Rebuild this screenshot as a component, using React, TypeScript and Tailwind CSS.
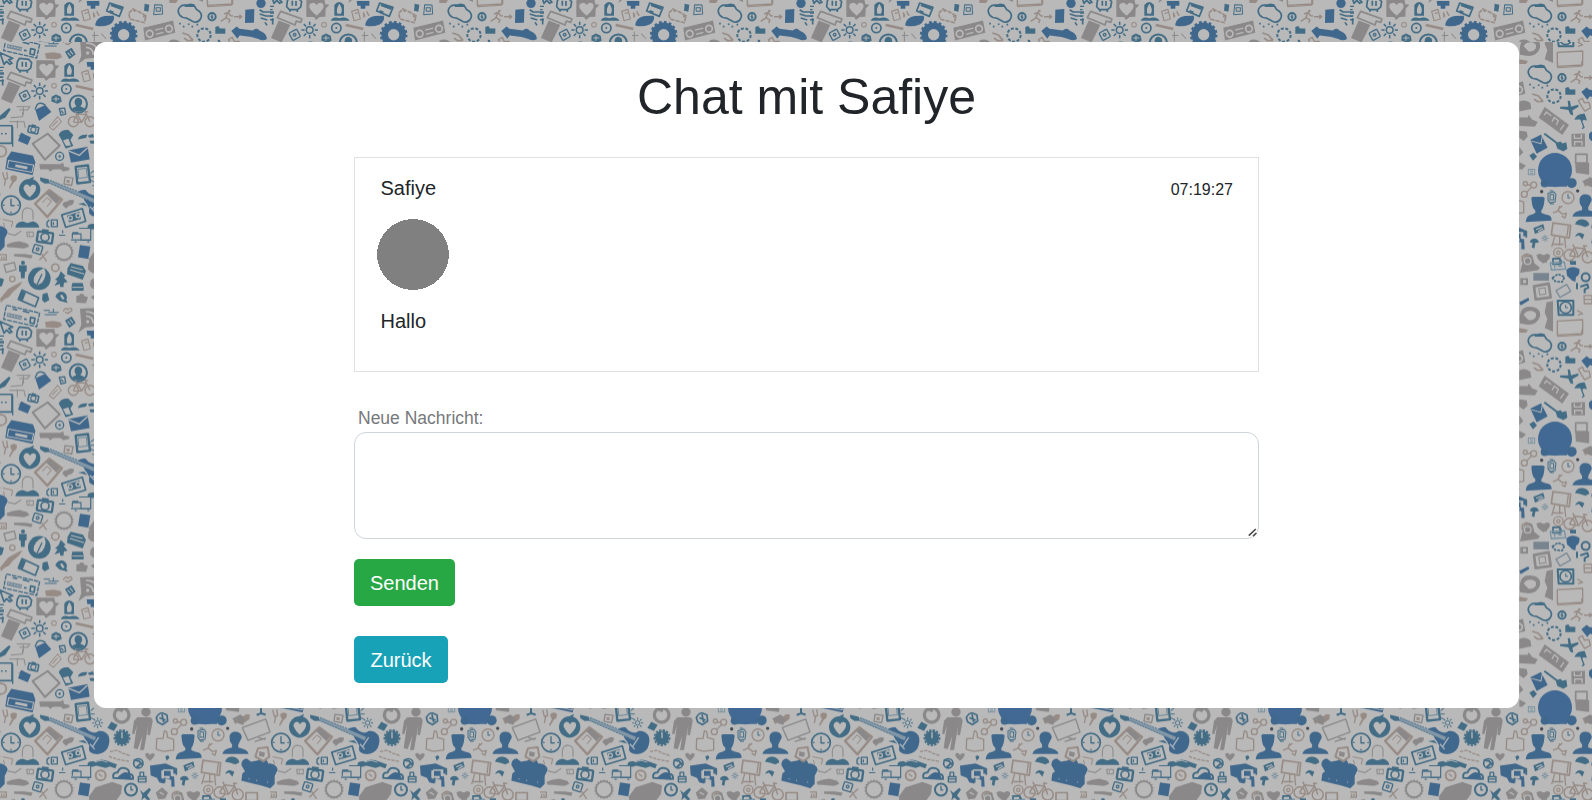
import React from "react";

const LIGHT = "#b9b9b9";
const BLUE = "#40678c";
const TEAL = "#436c85";
const GRAY = "#8a8888";
const TAN = "#978b85";

type P = { t?: string };

const solid = (fill: string) => ({ fill, stroke: "none" });
const line = (stroke: string, w: number) => ({
  fill: "none",
  stroke,
  strokeWidth: w,
  strokeLinejoin: "round" as const,
});

const Bust = ({ t, c = BLUE }: P & { c?: string }) => (
  <g transform={t} {...solid(c)}>
    <path d="M-21-30-17-33H14L19-30 17-12Q14 4 9 8V15Q20 20 32 22Q40 26 40 38L-38 42Q-36 26-27 22Q-16 20-9 15V8Q-18 0-19-12Z" />
  </g>
);

const Bike = ({ t }: P) => (
  <g transform={t} {...line(TAN, 4)}>
    <circle cx="-25" cy="8" r="15" />
    <circle cx="25" cy="8" r="15" />
    <path d="M-25 8-14-14H14L0 10H-25M0 10-14-14-20-22M14-14 25 8M14-14 10-22H20" />
  </g>
);

const Gear = ({ t, r, c, n = 14, w = 8 }: P & { r: number; c: string; n?: number; w?: number }) => (
  <g transform={t} fill="none" stroke={c}>
    <circle r={r} strokeWidth={w} />
    {Array.from({ length: n }, (_, i) => (
      <path key={i} transform={`rotate(${(360 / n) * i})`} d={`M0 ${-r}V${-r - w}`} strokeWidth={w * 0.8} />
    ))}
  </g>
);

const Sun = ({ t, c = TEAL }: P & { c?: string }) => (
  <g transform={t} {...line(c, 4.5)}>
    <circle r="10" />
    {[0, 45, 90, 135, 180, 225, 270, 315].map((a) => (
      <path key={a} transform={`rotate(${a})`} d="M0-15V-25" />
    ))}
  </g>
);

const Camera = ({ t, c = TEAL }: P & { c?: string }) => (
  <g transform={t} {...line(c, 7)}>
    <rect x="-23" y="-15" width="46" height="31" rx="3" />
    <circle r="12" strokeWidth="5" />
    <path d="M-12-20H8" />
  </g>
);

const SmallCamera = ({ t, c = TEAL }: P & { c?: string }) => (
  <g transform={t} {...line(c, 4)}>
    <rect x="-13" y="-12" width="26" height="25" rx="3" />
    <circle r="4" />
  </g>
);

const Guitar = () => (
  <g>
    <path d="M120 44 146 50 150 62 134 63 121 55Z" {...solid(TEAL)} />
    <path d="M232 90Q240 80 256 82L266 92 276 97Q288 101 296 93Q314 91 325 106Q333 124 322 146Q306 167 280 161Q262 155 268 138L262 126Q252 116 250 104Z" {...solid(BLUE)} />
    <path d="M148 57 286 116" stroke="#8397a7" strokeWidth="11" fill="none" />
    <path d="M150 53 262 98M146 60 270 115" stroke={TEAL} strokeWidth="2.5" strokeDasharray="6 3" fill="none" />
    <path d="M278 140 296 112M270 132 284 148" stroke="#a9b3bb" strokeWidth="4" fill="none" />
  </g>
);

/* Upper left quarter of the tile: gadgets, sun, bike, radio. */
const UpperLeft = () => (
  <g transform="translate(0 -42) scale(.33333)">
    <path d="M135 160 160 157 182 161 186 172 172 178 138 176Z" {...solid(TAN)} />
    <path d="M195 155 215 143 227 163 208 178Z" {...solid(TEAL)} />
    <path d="M203 158 212 168M210 152 219 163" {...line(LIGHT, 3)} />
    <path d="M0 158 38 175 26 179 36 190 29 193 20 184 12 193Z" {...line(TEAL, 5)} />
    <g {...line(TEAL, 5)}>
      <path d="M58 175 86 178 95 188 92 204 82 212H58L50 203 52 186Z" />
      <path d="M67 185V200M78 186V201M60 212V218M82 212V219" />
      <path d="M0 202H12M0 212H8M0 222H12M0 232H8M0 242H12" strokeWidth="4" />
    </g>
    <path d="M109 181H163L166 196 178 197 167 209 166 233 149 234 138 243 132 234H109Z" {...solid(GRAY)} />
    <path d="M140 230Q112 209 119 196Q131 186 140 198Q150 185 160 196Q165 210 140 230Z" {...solid(LIGHT)} />
    <path d="M193 198Q207 180 222 198V230H193ZM182 245Q190 230 208 238Q228 230 239 245Z" {...solid(TEAL)} />
    <path d="M208 194Q220 210 213 224H202Q197 210 208 194Z" {...solid(LIGHT)} />
    <path d="M260 186H298V200H286V209H272V200H262Z" {...solid(BLUE)} />
    <path d="M245 217 264 211 271 240 252 245ZM254 223 264 221M280 220 282 236M290 216 296 230" {...line(TAN, 3.5)} />
    <path d="M32 217 96 240 92 250 79 246 75 258 22 236Z" {...line(GRAY, 5)} />
    <path d="M26 244 61 258 35 310 3 297Z" {...solid(GRAY)} />
    <SmallCamera t="translate(74 287) rotate(-28)" />
    <Sun t="translate(119 273)" />
    <circle cx="162" cy="257" r="7" {...line(TAN, 3)} />
    <circle cx="199" cy="267" r="14" {...line(TEAL, 5)} />
    <circle cx="199" cy="267" r="3" {...solid(TEAL)} />
    <path d="M227 258 280 270" {...line(TAN, 8)} />
    <path d="M155 290 168 283 182 290 185 305 172 311 154 304Z" {...solid(TEAL)} />
    <path d="M160 297H178M168 290V305" {...line(LIGHT, 3)} />
    <circle cx="235" cy="312" r="26" {...line(TEAL, 6)} />
    <path d="M235 293Q249 295 246 311L241 319Q250 321 255 327Q236 343 215 327Q221 321 229 319L224 310Q222 295 235 293Z" {...solid(TEAL)} />
    <path d="M106 329 136 315 154 336 117 363Z" {...solid(BLUE)} />
    <path d="M105 328 112 313Q122 305 136 315" {...line(TEAL, 4)} />
    <path d="M178 326 194 324 197 342 183 346ZM184 332 190 340" {...line(TEAL, 4)} />
    <path d="M0 347 27 324 32 328 16 353 0 360Z" {...solid(TEAL)} />
    <path d="M50 320H90L82 330H58M70 322V345M32 353 68 350V336M28 365H72L76 384M52 362V385M55 408 70 400" {...line(GRAY, 3)} />
    <path d="M148 380 173 350 184 365 160 390ZM157 379 173 362" {...line(TAN, 3)} />
    <Bike t="translate(245 357)" />
    <g transform="translate(100 389) rotate(12) scale(.65)"><Camera /></g>
    <path d="M0 377H36V430H0" {...line(TEAL, 5)} />
    <path d="M38 380V440" {...line(TEAL, 4)} />
    <path d="M3 401H25" {...line(TEAL, 5)} strokeDasharray="5 7" />
    <path d="M63 398 93 412 83 435 54 423Z" {...solid(BLUE)} />
    <path d="M98 431 143 401 179 437 135 479Z" {...line(GRAY, 6)} />
    <path d="M176 405Q183 388 205 390L220 405 211 420 220 438 197 446 185 420Z" {...solid(TEAL)} />
    <path d="M189 421 205 416 213 436 198 438Z" {...solid(LIGHT)} />
    <path d="M234 418Q235 403 262 404L258 414ZM263 407 279 402 282 412 268 413ZM268 422H285V431H272Z" {...solid(TEAL)} />
    <circle cx="3" cy="454" r="16" {...line(TAN, 5)} />
    <circle cx="179" cy="469" r="12" {...line(TEAL, 4)} />
    <circle cx="179" cy="469" r="3.5" {...solid(TEAL)} />
    <path d="M205 451 263 440 269 478 213 488Z" {...solid(BLUE)} />
    <path d="M206 453 238 466 263 443" {...line(LIGHT, 4)} />
    <path d="M34 454 99 467 106 486 98 525 16 507 21 474Z" {...solid(BLUE)} />
    <path d="M26 481 101 495 96 517 22 503Z" {...line(LIGHT, 3)} />
    <path d="M46 497 82 504" {...line(LIGHT, 8)} />
    <path d="M118 492H180L190 488 192 500 208 503V510L190 515 182 508H160L150 515 145 508H120Z" {...solid(GRAY)} />
    <path d="M227 500 264 496 270 546 232 550Z" {...line(TEAL, 7)} />
    <path d="M234 508 259 505 262 532 236 535Z" {...line(TEAL, 2)} />
    <path d="M272 520 282 512M272 530H284M271 540 282 546" {...line(TEAL, 3)} />
    <path d="M195 531 219 534 215 556 192 552Z" {...line(GRAY, 4)} />
    <path d="M200 539 210 541 208 549 199 547Z" {...solid(TAN)} />
    <path d="M8 517 13 537 23 535 20 516M17 537 13 557" {...line(TAN, 4)} />
    <path d="M31 530Q42 520 51 530Q51 545 42 546L30 566 27 563 36 544Q30 540 31 530Z" {...solid(TAN)} />
  </g>
);

/* Band holding the guitar, clocks, busts and cloud. */
const MiddleBand = () => (
  <g transform="translate(0 120.6) scale(.33333)">
    <circle cx="89" cy="81" r="32" {...solid(TEAL)} />
    <path d="M89 48 102 42 98 54Z" {...solid(TEAL)} />
    <path d="M89 104Q63 79 74 68Q84 61 90 73Q97 61 107 69Q114 82 89 104Z" {...solid(LIGHT)} />
    <Guitar />
    <circle cx="33" cy="128" r="28" {...line(TEAL, 5)} />
    <path d="M33 109V129H44M9 128H14M52 128H57M33 147V152" {...line(TEAL, 4)} />
    <path d="M105 123 148 82 186 111 142 163Z" {...line(TAN, 7)} />
    <path d="M138 93 152 84 181 110 169 124Z" {...solid(GRAY)} />
    <path d="M127 120 141 105 154 116 141 132" {...line(TAN, 3)} />
    <path d="M187 127Q190 116 201 117 208 109 222 113 222 128 208 129L198 138Z" {...solid(GRAY)} />
    <path d="M234 124 252 121 262 131Z" {...solid(TEAL)} />
    <path d="M67 171V152Q70 136 83 136Q100 138 99 153V171" {...line(GRAY, 3)} />
    <path d="M46 195Q48 178 68 176L82 181 99 176Q117 181 118 195Z" {...solid(TEAL)} />
    <path d="M185 157 247 138 257 176 197 194Z" {...line(TEAL, 5)} />
    <path d="M201 159 238 148 243 169 207 179Z" {...solid(TEAL)} />
    <circle cx="211" cy="166" r="6" {...line(LIGHT, 4)} />
    <circle cx="234" cy="159" r="6" {...line(LIGHT, 4)} />
    <path d="M154 172H172V192H154ZM148 172 141 178V190L148 194M160 178V187" {...line(TEAL, 4)} />
    <path d="M8 170 38 177 34 194M10 180 14 193" {...line(TAN, 3)} />
    <path d="M24 213 45 218 64 205M80 208H100V222H82ZM88 212V218" {...line(GRAY, 3)} />
    <Camera t="translate(135 224) rotate(8)" />
    <path d="M20 246 35 240 58 236 82 243 88 252 72 258 40 255 22 254ZM42 274H74L98 278 94 288 74 284 42 281Z" {...solid(GRAY)} />
    <path d="M177 218H196M188 203V212M213 232H273M217 210H235M237 197H272V233H243V214H217V228M224 238H230M262 238H268" {...line(TEAL, 3.5)} />
    <SmallCamera t="translate(113 260) rotate(18)" />
    <path d="M118 292 144 266M122 270 140 296" {...line(TAN, 4)} />
    <Gear t="translate(192 268)" r={24} c={GRAY} n={18} w={5} />
    <path d="M240 247 271 252 265 289 234 284Z" {...solid(BLUE)} />
    <path d="M0 276H19V292H0M5 282V289M12 282V289" {...line(TAN, 4)} />
    <g transform="translate(293 69) scale(.65)"><Sun /></g>
    <path d="M334 65 353 75 342 93 322 84Z" {...solid(TEAL)} />
    <circle cx="365" cy="45" r="22" {...line(GRAY, 10)} />
    <path d="M350 26 365 32 370 18" {...line(GRAY, 8)} />
    <circle cx="366" cy="113" r="21" {...solid(TEAL)} />
    <circle cx="366" cy="113" r="23" {...line(TEAL, 5)} strokeDasharray="7 4" />
    <path d="M366 96V115" {...line(LIGHT, 4)} />
    <circle cx="438" cy="36" r="14" {...solid(GRAY)} />
    <path d="M412 52H448Q458 53 458 64L450 106 442 105 445 75 432 150 420 151 427 108 413 148 401 145 408 95 411 76 403 103 396 101 402 63Z" {...solid(GRAY)} />
    <path d="M330 155 350 151 369 160 390 167M327 169 352 178 387 184" {...line(TAN, 4)} strokeDasharray="10 3" />
    <path d="M262 194Q263 182 286 184 304 174 326 184L351 193 346 205 330 199 317 204 289 197 276 201Z" {...solid(TEAL)} />
    <path d="M284 186 303 181 322 187" {...line(LIGHT, 3)} />
    <circle cx="302" cy="226" r="15" {...line(TAN, 6)} />
    <path d="M296 221 307 230" {...line(TAN, 4)} />
    <path d="M340 234Q336 218 353 217Q359 199 377 205Q389 210 387 221Q401 223 399 237Z" {...line(TEAL, 6)} />
    <path d="M350 236Q373 205 391 223L395 239Z" {...solid(BLUE)} />
    <circle cx="415" cy="190" r="14" {...line(TEAL, 5)} />
    <path d="M401 180 417 183 428 195M408 204 422 191" {...line(TEAL, 6)} />
    <path d="M415 230H438V246H415ZM420 229V217H431V230M415 237H438" {...line(TEAL, 4)} />
    <path d="M469 53Q476 39 487 39L501 45 503 63 488 74 473 66Z" {...line(TEAL, 5)} />
    <path d="M478 53 497 61M486 43 491 67" {...line(TEAL, 5)} />
    <path d="M470 116H489L493 93Q503 91 502 112L521 118V150L490 154 469 148Z" {...line(TAN, 4)} />
    <path d="M450 183Q431 167 437 160 445 156 450 165 457 156 464 162 465 171 450 183Z" {...solid(GRAY)} />
    <path d="M496 169Q508 162 508 174L500 182Z" {...solid(TEAL)} />
    <g {...line(TAN, 4)}>
      <circle cx="523" cy="95" r="9" /><circle cx="551" cy="67" r="9" /><circle cx="526" cy="63" r="6" />
      <path d="M531 88 545 73M531 66 542 67" />
    </g>
    <path d="M450 197 497 190 526 203 530 219 522 226 524 260 514 260V240L495 236 493 251 478 247 471 234 452 226Z" {...solid(BLUE)} />
    <path d="M489 209H516V225H530M488 211V232H509" {...line(LIGHT, 8)} />
    <path d="M488 206H529V225M494 233V248" {...line(TEAL, 5)} />
    <Bust t="translate(565 136)" />
    <g transform="translate(706 132) scale(.97)"><path d="M-18-24Q-14-40 2-38 19-36 20-20L9 2V11Q38 17 41 31H-40Q-37 15-10 11V2L-17-9Z" {...solid(BLUE)} /></g>
    <path d="M594 92 612 88 618 96 615 118 600 121 594 112ZM600 96H611V112H600ZM599 85H609M600 124H612" {...line(TEAL, 3)} />
    <circle cx="654" cy="105" r="18" {...line(TAN, 4)} />
    <path d="M654 94V106H661" {...line(TEAL, 3)} />
    <circle cx="575" cy="87" r="5" {...solid("#444a52")} />
    <circle cx="683" cy="85" r="5" {...solid("#444a52")} />
    <path d="M609 151 625 144 629 130M626 145 638 155M623 140 637 130M637 155 649 152 645 166 635 160" {...line(TAN, 4)} />
    <path d="M550 196 580 184 584 201 555 214Z" {...solid(TEAL)} />
    <path d="M558 201 576 194M564 207 580 198" {...line(LIGHT, 3)} />
    <g transform="translate(585 227) scale(.42)"><Sun /></g>
    <path d="M540 239Q540 230 552 228 564 229 567 239L556 241 553 258 545 254 548 241Z" {...solid(TEAL)} />
    <path d="M609 181 662 188 658 226 604 217Z" {...line(TAN, 5)} />
    <path d="M655 190 651 221M614 222 605 253M644 225 647 257M629 222V249M607 245H640" {...line(TAN, 4)} />
    <path d="M675 185Q681 168 699 170 716 173 718 187L706 193 690 188ZM675 222Q684 202 703 216L697 230 687 218Z" {...solid(TEAL)} />
    <path d="M724 195Q724 177 740 175L753 185 774 181Q777 174 790 181 802 177 804 190 831 192 833 210L824 228 824 252 811 265 783 256 757 250 724 242 727 220 735 214Z" {...solid(BLUE)} />
    <path d="M747 235V238M770 240V243M803 245V248" {...line(LIGHT, 3)} />
    <path d="M727 83 797 57 810 96 744 121Z" {...line(GRAY, 4)} />
    <path d="M774 112 795 119M764 125 798 114" {...line(GRAY, 4)} />
    <path d="M700 63Q714 46 728 54 734 39 750 44L748 58 732 69 716 64 706 73Z" {...solid(TAN)} />
    <path d="M774 145 803 142 808 170 790 184 766 170Z" {...line(TAN, 6)} />
    <path d="M778 154 795 158 792 171 777 168Z" {...solid(GRAY)} />
    <path d="M770 45 783 40V24M783 40 797 44" {...line(TEAL, 6)} />
    <path d="M266 291 286 262 337 246 366 256 363 282 349 301H270Z" {...solid(GRAY)} />
    <circle cx="393" cy="269" r="18" {...line(TEAL, 6)} />
    <path d="M393 258V270H400" {...line(TEAL, 4)} />
    <path d="M420 270 430 279 448 264 453 269 441 286 451 298 443 301 433 292 424 301 427 286Z" {...solid(TEAL)} />
    <path d="M467 278 486 262 504 278 495 296 475 298Z" {...solid(GRAY)} />
    <path d="M479 277 492 284" {...line(LIGHT, 4)} />
    <path d="M517 282Q530 269 542 280L549 296 526 302 517 294ZM530 280V272" {...line(TAN, 5)} />
    <path d="M580 303Q555 287 562 276 574 269 581 281 590 268 600 278 602 290 580 303Z" {...solid(GRAY)} />
    <circle cx="625" cy="270" r="14" {...line(TAN, 4)} />
    <circle cx="625" cy="270" r="5" {...line(TAN, 4)} />
    <Bike t="translate(687 272) rotate(7) scale(1.1)" />
    <path d="M738 278H772V302H738Z" {...line(TAN, 5)} />
    <path d="M609 288H630V305H609ZM633 292V304" {...line(TEAL, 5)} />
  </g>
);

/* Lower left: tree, tablet, keyboard, feed bubble. */
const LowerLeft = () => (
  <g transform="translate(0 218) scale(.33333)">
    <circle cx="69" cy="8" r="6" {...solid(TEAL)} />
    <path d="M57 16H80V34L75 36 74 55H63L62 36 57 34Z" {...solid(TEAL)} />
    <path d="M12 15 43 7 48 29 18 37Z" {...line(GRAY, 4)} />
    <circle cx="118" cy="56" r="34" {...solid(TEAL)} />
    <path d="M101 66Q97 40 132 24Q144 45 126 68L112 76Z" {...solid(LIGHT)} />
    <path d="M109 78 126 42" {...line(TEAL, 4)} />
    <circle cx="166" cy="23" r="11" {...line(TAN, 5)} />
    <path d="M212 9 249 18 258 34 248 59 201 43 203 24Z" {...solid(TEAL)} />
    <path d="M210 29 252 42M213 20 248 29" {...line(LIGHT, 3)} />
    <path d="M265 9Q275 -4 290 2V39Q272 42 264 27ZM272 62Q280 52 292 56V90Q274 88 270 76ZM272 112 290 100V126Z" {...solid(GRAY)} />
    <path d="M182 34 197 48 191 52 203 66 192 68 190 82 180 80V72L163 77 173 62 165 59 176 49Z" {...solid(TEAL)} />
    <path d="M217 69H248L251 80V92H215V79Z" {...solid(TEAL)} />
    <path d="M217 82H250" {...line(LIGHT, 3)} />
    <path d="M68 65 58 68 40 78 25 86 10 104 0 117 3 128 14 117 26 112 39 96 57 80Z" {...solid(TAN)} />
    <path d="M66 90 116 113 106 140 55 118Z" {...line(TEAL, 5)} />
    <path d="M65 92 78 98 68 122 57 116Z" {...solid(TEAL)} />
    <path d="M128 102 142 98 148 120 134 128 126 120ZM166 110Q173 92 190 96 205 105 199 119L203 129 178 122Z" {...solid(TEAL)} />
    <path d="M183 105 191 117" {...line(LIGHT, 7)} />
    <path d="M229 108 238 106 241 101 250 102 253 108 264 112 258 130 229 128Z" {...solid(GRAY)} />
    <circle cx="37" cy="57" r="8" {...line(TAN, 4)} />
    <path d="M0 54 12 58 6 78 0 80Z" {...solid(TEAL)} />
    <path d="M19 136 119 159 110 200 11 178Z" {...line(TEAL, 4)} strokeDasharray="14 3" />
    <path d="M22 158 67 168 64 180 20 170Z" {...solid("#74899a")} />
    <path d="M24 164 66 174" stroke={LIGHT} strokeWidth="3" strokeDasharray="5 4" />
    <path d="M72 177 80 178M92 172 105 175 102 191 90 188ZM38 147 52 150M68 153 88 158" {...line(TEAL, 5)} />
    <path d="M131 151H150M145 157H176M134 164H170M160 146V158" {...line(TEAL, 3)} />
    <path d="M190 154Q196 140 204 149 213 139 216 151L204 160 195 156" {...line(TAN, 4)} />
    <path d="M240 146 306 143 309 197 256 202 235 218 244 193Z" {...solid(GRAY)} />
    <circle cx="263" cy="185" r="5" {...solid(LIGHT)} />
    <path d="M258 168Q279 169 280 190M258 155Q293 155 293 188" {...line(LIGHT, 5)} />
  </g>
);

/* Icons crossing the upper strip, right of the feed bubble. */
const TopStrip = () => (
  <g transform="translate(0 19) scale(.33333)">
    <path d="M286 72Q290 52 314 48L341 47Q347 62 329 73 306 83 286 76Z" {...solid(BLUE)} />
    <path d="M329 9 369 22 358 49 320 33Z" {...line(TEAL, 5)} />
    <path d="M333 14 365 26M328 34 340 38" {...line(TEAL, 8)} />
    <circle cx="371" cy="104" r="27" {...line(BLUE, 20)} />
    <circle cx="371" cy="104" r="38" {...line(BLUE, 7)} strokeDasharray="8 6.9" />
    <path d="M398 28 417 35 438 48 433 68 390 57 386 40ZM405 35 397 23M429 50 440 47" {...line(TAN, 5)} strokeDasharray="13 3" />
    <path d="M434 11 448 14 445 35 432 32Z" {...solid(TEAL)} />
    <path d="M464 14 486 15 488 42 461 44ZM468 23H481V34H469Z" {...line(TEAL, 3)} />
    <path d="M430 83 519 61 526 98 435 121Z" {...solid(GRAY)} />
    <circle cx="449" cy="101" r="10" {...line(LIGHT, 5)} />
    <circle cx="507" cy="86" r="10" {...line(LIGHT, 5)} />
    <path d="M465 90 490 84M468 103 490 97M440 78 510 61" {...line(LIGHT, 4)} />
    <path d="M539 45Q530 31 540 21 548 12 560 17 573 8 584 19 588 30 598 34 608 44 602 56 595 70 580 65L559 54Q546 54 539 45Z" {...line(TEAL, 5)} />
    <path d="M540 68V73M551 77V82M566 70V75M577 77V82M592 71V76" {...line(TEAL, 5)} />
    <circle cx="636" cy="50" r="11" {...line(TEAL, 6)} />
    <path d="M636 43V57M632 49 640 53" {...line(TEAL, 4)} />
    <circle cx="688" cy="33" r="4" {...solid(TAN)} />
    <path d="M672 42 684 37 692 47 699 48M683 39 678 53 690 60 686 69M677 54 662 64M702 50H725M718 44 725 50 718 56" {...line(TAN, 4.5)} />
    <path d="M736 29 763 27 762 68 735 69Z" {...solid(BLUE)} />
    <path d="M779 29 789 36H822M779 42 798 48H820M782 54 802 60M795 67 801 76M818 55V73" {...line(TEAL, 5)} />
    <path d="M547 99 565 105 579 121M552 114 563 122 580 121" {...line(TAN, 5)} />
    <circle cx="612" cy="105" r="20" {...line(TEAL, 6)} strokeDasharray="9 5" />
    <path d="M646 81 655 78 660 85H676V101H646Z" {...solid(TEAL)} />
    <path d="M694 93 710 79 718 86 758 91Q771 81 779 92 800 99 801 117 789 124 775 117L754 111 719 106 712 116Z" {...solid(BLUE)} />
    <path d="M623 3V20L695 16V0" {...line(TAN, 3)} />
    <circle cx="783" cy="10" r="14" {...solid(BLUE)} />
    <path d="M281 40 285 50M291 38 298 47" {...line(TAN, 4)} />
    <path d="M276 106H295M283 95V124M304 101 318 116" {...line(GRAY, 3)} />
  </g>
);

/* Right-hand column: plane, ticket, umbrella, floppy. */
const RightColumn = () => (
  <g transform="translate(162 -42) scale(.33333)">
    <path d="M22 178 48 183 42 192H22Z" {...solid(TAN)} />
    <path d="M22 305Q40 296 55 309L58 327 22 334ZM22 352H47L50 345 61 359 77 366 69 380 22 378ZM22 392 44 395 47 410 35 423 22 414ZM22 441 34 457 22 468ZM22 486 42 497 31 508H22Z" {...solid(GRAY)} />
    <path d="M98 321 171 375 151 405 80 353Z" {...solid(GRAY)} />
    <path d="M97 345 103 336 118 348M120 365 127 352 139 362 133 375M145 390 156 374" {...line(LIGHT, 4)} />
    <path d="M167 302 174 303 177 320 199 314V321L181 331 184 346 175 343 169 330 144 326 145 320 169 320Z" {...solid(TEAL)} />
    <path d="M199 302 211 295 217 308 231 307 235 324 218 333 209 319Z" {...line(TAN, 4)} />
    <path d="M187 359Q194 340 218 341L225 361 215 360 209 364 204 358Z" {...solid(TEAL)} />
    <path d="M208 361 216 382 210 386" {...line(TEAL, 4)} />
    <path d="M97 401 137 431" stroke={TEAL} strokeWidth="6" />
    <path d="M131 430 145 424 151 430 163 427 166 447 154 454 136 446Z" {...solid(TEAL)} />
    <path d="M55 420 87 404 107 443 74 461Z" {...solid(BLUE)} />
    <path d="M58 423 87 431 91 409" {...line(LIGHT, 3)} />
    <path d="M178 402 219 400V440H179Z" {...solid(GRAY)} />
    <path d="M187 404V415H208V404M188 437V425H210V437" {...line(LIGHT, 4)} />
    <path d="M231 402Q237 391 250 394V427Q236 426 231 414Z" {...solid(BLUE)} />
    <path d="M52 466 65 458 75 470 63 482Z" {...solid(TEAL)} />
    <circle cx="129" cy="510" r="51" {...solid("#416993")} />
    <path d="M98 535H165V560H98Z" {...solid("#416993")} />
    <circle cx="98" cy="550" r="12" {...solid(BLUE)} />
    <circle cx="179" cy="549" r="15" {...solid(BLUE)} />
    <path d="M49 508H68V524H49ZM54 513H63M54 519H63" {...line("#7893a3", 3)} />
    <path d="M191 463H225V489H191ZM192 490H229V521L194 516Z" {...line(GRAY, 5)} />
    <path d="M194 490H228V519H194Z" {...solid(GRAY)} />
    <path d="M210 544 235 531 250 542 244 563 226 557Z" {...solid(GRAY)} />
  </g>
);

const RightLower = () => (
  <g transform="translate(162 213) scale(.33333)">
    <path d="M37 4 60 0 67 25 84 38 77 46 24 53 30 30Z" {...solid(GRAY)} />
    <circle cx="47" cy="18" r="10" {...line(LIGHT, 4)} />
    <path d="M72 0H112L103 25 84 12ZM25 70H48V90H25Z" {...solid(GRAY)} />
    <path d="M33 75H42V84H33Z" {...solid(LIGHT)} />
    <path d="M64 54H111V77H64Z" {...solid("#788590")} />
    <path d="M115 24 157 21 161 42 118 45ZM128 27V40M138 33H150" {...line("#7591a2", 4)} />
    <path d="M121 69 138 57 158 66 150 81 130 79Z" {...line(TEAL, 5)} strokeDasharray="8 3" />
    <path d="M66 94 110 86 116 127 71 133Z" {...line(GRAY, 8)} />
    <path d="M80 101 99 98 102 117 83 120Z" {...line(GRAY, 3)} />
    <path d="M132 107 164 88 176 109 144 127Z" {...line("#7b8b97", 4)} />
    <path d="M163 44Q178 29 202 42 205 60 192 66L190 80 181 77 165 62Z" {...solid(BLUE)} />
    <path d="M173 18H192V29H175Z" {...solid(TEAL)} />
    <circle cx="221" cy="67" r="12" {...line(TEAL, 6)} />
    <path d="M205 95 226 88 229 98 218 103V115M195 84V103" {...line(TEAL, 6)} />
    <path d="M22 142 49 128 52 136 26 151Z" {...solid(BLUE)} />
    <path d="M137 137H184V180H140Z" {...line(TEAL, 6)} />
    <circle cx="161" cy="158" r="17" {...line(TEAL, 5)} />
    <path d="M161 149V158H168" {...line(TEAL, 3)} />
    <path d="M23 190Q24 153 55 155 88 158 84 184 77 208 48 209L24 205ZM104 142 123 138V230L98 219 106 192 98 172Z" {...solid(GRAY)} />
    <path d="M35 180Q42 165 60 168 76 172 71 186 64 198 49 195Z" {...solid(LIGHT)} />
    <path d="M136 198 212 194V236L136 240Z" {...line(TAN, 4)} />
    <path d="M216 122H240V146H217ZM218 133H239M196 166 212 176 198 180" {...line(TAN, 4)} />
    <path d="M68 237H98V245H68Z" {...solid(TEAL)} />
  </g>
);

const TILE_W = 270;
const TILE_H = 268.7;

const Backdrop = () => (
  <svg className="absolute inset-0 h-full w-full blur-[0.4px]" aria-hidden="true">
    <defs>
      <g id="tile">
        <UpperLeft />
        <MiddleBand />
        <LowerLeft />
        <TopStrip />
        <RightColumn />
        <RightLower />
      </g>
      <pattern id="icons" width={TILE_W} height={TILE_H} patternUnits="userSpaceOnUse" y="42">
        <rect width={TILE_W} height={TILE_H} fill={LIGHT} />
        {[-TILE_H, 0, TILE_H].map((y) =>
          [-TILE_W, 0].map((x) => <use key={`${x}/${y}`} href="#tile" x={x} y={y} />)
        )}
      </pattern>
      <pattern id="iconsTop" href="#icons" y="-19" />
    </defs>
    <rect y="42" width="100%" height="758" fill="url(#icons)" />
    <rect width="100%" height="42" fill="url(#iconsTop)" />
  </svg>
);

const Message = ({ name, time, text }: { name: string; time: string; text: string }) => (
  <article className="h-[215px] border border-[#dee0e2] pt-[15px] pr-[25px] pl-[22px] text-[20px] leading-[30px]">
    <header className="flex items-center justify-between pl-[3.5px]">
      <span>{name}</span>
      <time className="pt-[3px] text-[16px] leading-[27px]">{time}</time>
    </header>
    <svg className="mt-4 block h-[71px] w-[72px]" viewBox="0 0 72 71" shapeRendering="crispEdges">
      <ellipse cx="36" cy="35.5" rx="36" ry="35.5" fill="#808080" />
    </svg>
    <p className="mt-4 pl-[3.5px]">{text}</p>
  </article>
);

export default function App() {
  return (
    <div className="relative h-[800px] w-full overflow-hidden bg-[#b9b9b9] pt-[42px] font-['Liberation_Sans',Arial,sans-serif] text-[#212529]">
      <Backdrop />
      <main className="relative ml-[94px] h-[666px] w-[1425px] rounded-[12px] bg-white px-[260px] pt-[25px]">
        <h1 className="text-center text-[50px] leading-[60px]">Chat mit Safiye</h1>
        <section className="mt-[30px]">
          <Message name="Safiye" time="07:19:27" text="Hallo" />
        </section>
        <form className="mt-[33px] flex flex-col items-start" onSubmit={(e) => e.preventDefault()}>
          <label htmlFor="message" className="pl-1 text-[17.5px] leading-[27px] text-[#76787b]">
            Neue Nachricht:
          </label>
          <div className="relative w-full">
            <textarea
              id="message"
              className="block h-[107px] w-full resize-none rounded-[12px] border border-[#ced4da] bg-white"
            />
            <svg className="pointer-events-none absolute right-[2px] bottom-[2px] h-[9px] w-[9px]" viewBox="0 0 9 9">
              <path d="M.8 7.6 7.8 1M5 8.2 8.4 5" fill="none" stroke="#4d4d4d" strokeWidth="1.7" />
            </svg>
          </div>
          <button className="mt-5 h-[47px] w-[101px] rounded-[5px] bg-[#28a745] text-[20px] text-white">Senden</button>
          <button
            type="button"
            className="mt-[30px] h-[47px] w-[94px] rounded-[5px] bg-[#17a2b8] text-[20px] text-white"
          >
            Zurück
          </button>
        </form>
      </main>
    </div>
  );
}
